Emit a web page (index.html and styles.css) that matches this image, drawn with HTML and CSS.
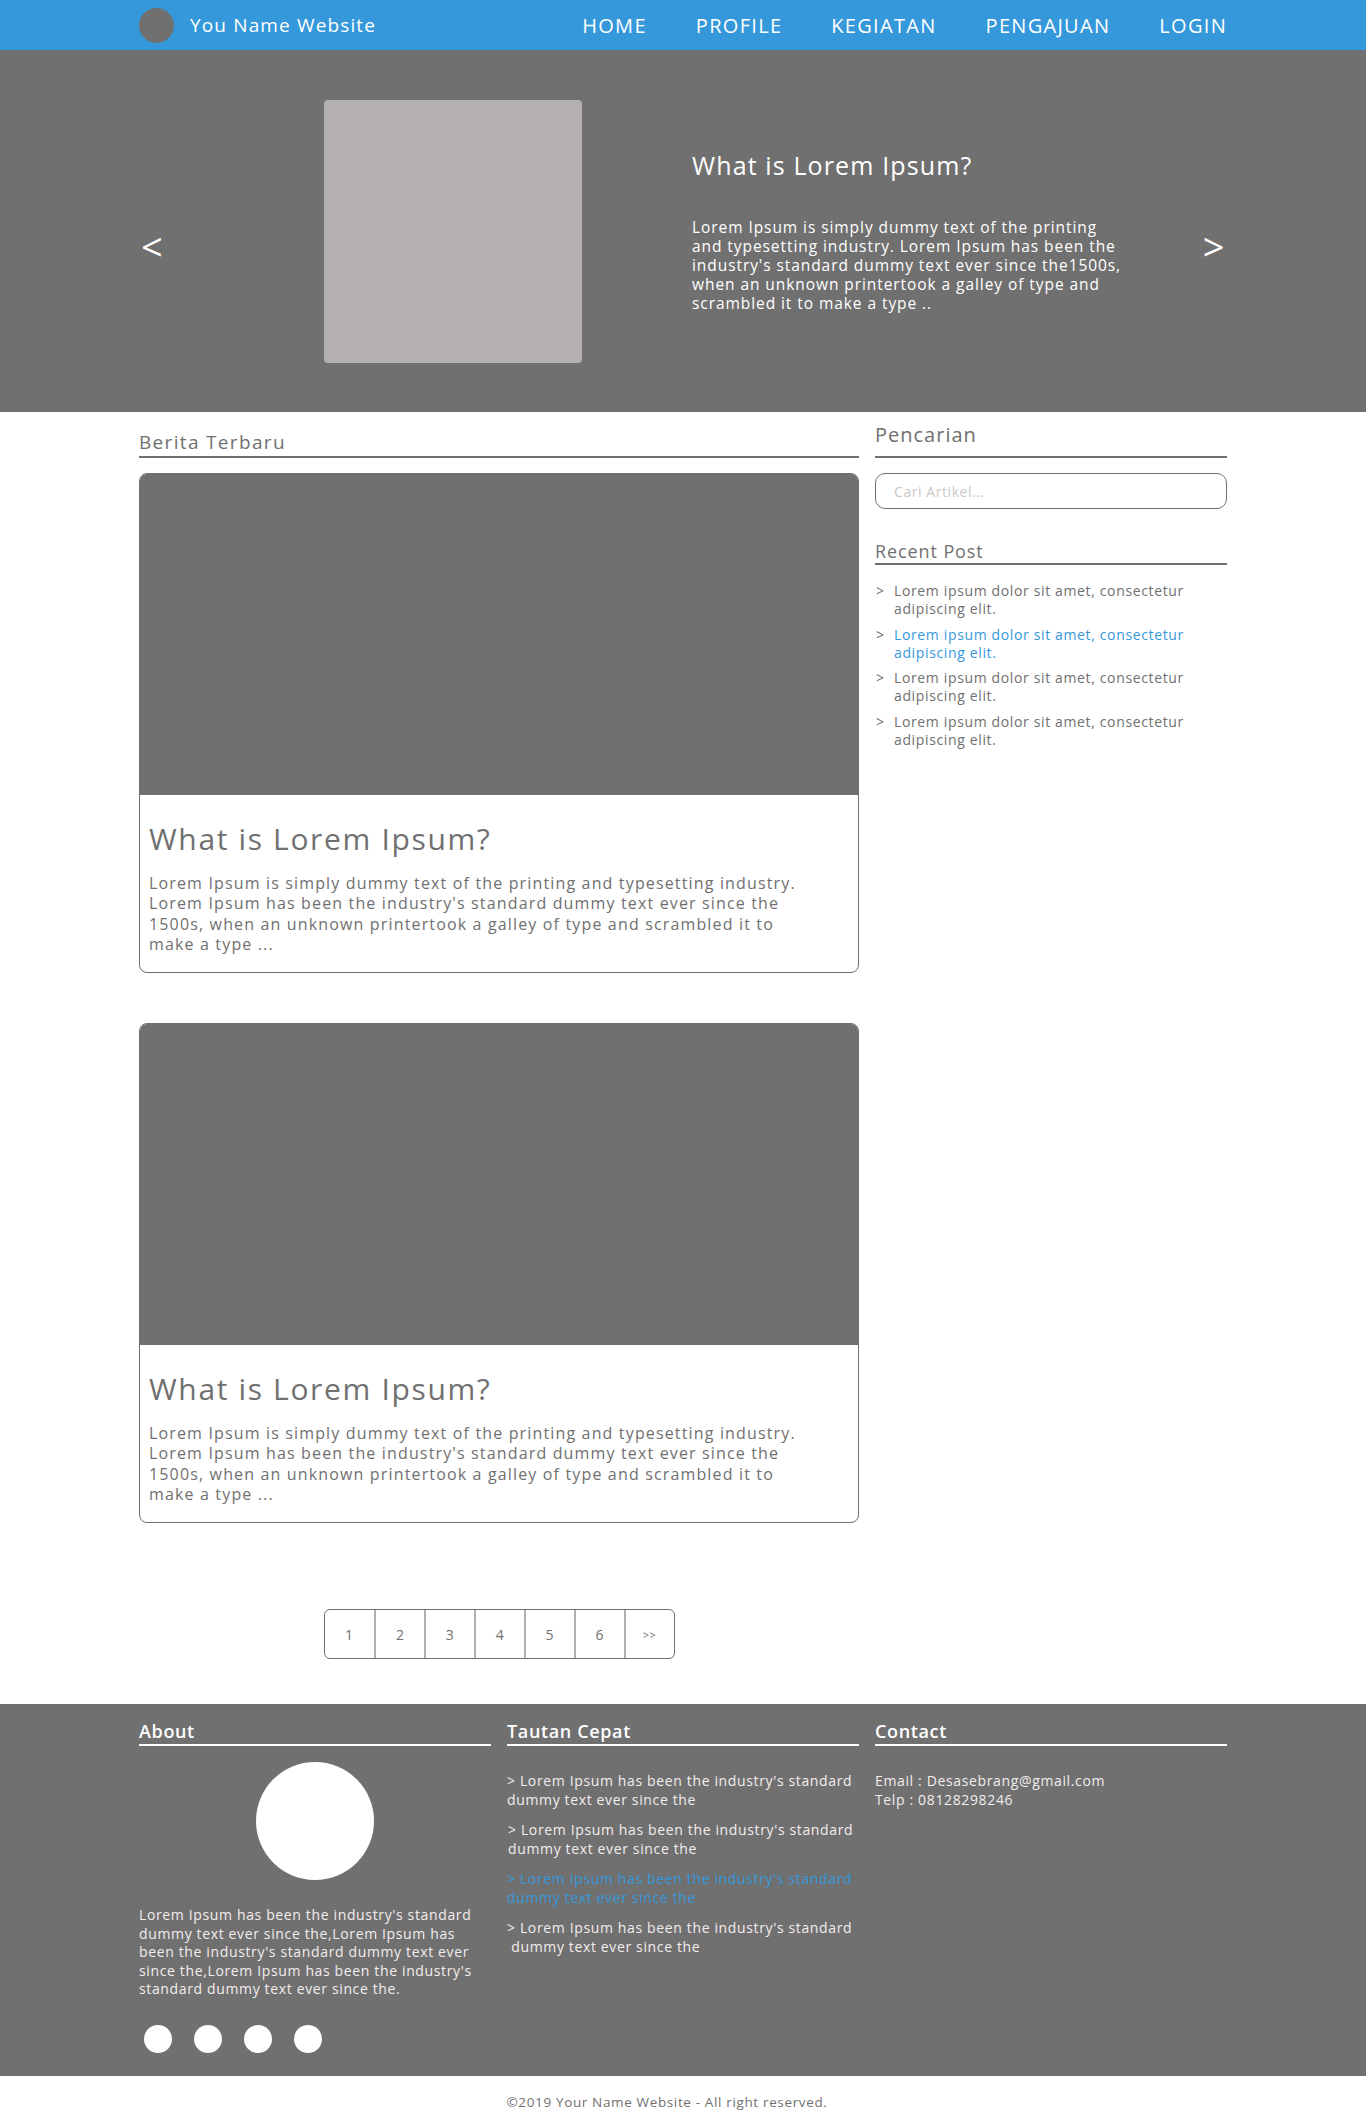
FILE: index.html
```html
<!DOCTYPE html>
<html lang="id">
<head>
<meta charset="utf-8">
<title>You Name Website</title>
<link rel="stylesheet" href="styles.css">
</head>
<body>
<header class="navbar">
  <div class="container nav-inner">
    <a class="brand" href="#"><span class="brand-logo"></span><span class="brand-name">You Name Website</span></a>
    <nav class="menu">
      <a href="#">HOME</a>
      <a href="#">PROFILE</a>
      <a href="#">KEGIATAN</a>
      <a href="#">PENGAJUAN</a>
      <a href="#">LOGIN</a>
    </nav>
  </div>
</header>

<section class="hero">
  <div class="container hero-inner">
    <span class="arrow">&lt;</span>
    <div class="slide">
      <div class="slide-img"></div>
      <div class="slide-text">
        <h1>What is Lorem Ipsum?</h1>
        <p>Lorem Ipsum is simply dummy text of the printing<br>and typesetting industry. Lorem Ipsum has been the<br>industry's standard dummy text ever since the1500s,<br>when an unknown printertook a galley of type and<br>scrambled it to make a type ..</p>
      </div>
    </div>
    <span class="arrow arrow-right">&gt;</span>
  </div>
</section>

<main class="container main">
  <section class="news">
    <h2 class="section-title">Berita Terbaru</h2>
    <article class="card">
      <div class="card-img"></div>
      <div class="card-body">
        <h3>What is Lorem Ipsum?</h3>
        <p>Lorem Ipsum is simply dummy text of the printing and typesetting industry. Lorem Ipsum has been the industry's standard dummy text ever since the 1500s, when an unknown printertook a galley of type and scrambled it to make a type ...</p>
      </div>
    </article>
    <article class="card">
      <div class="card-img"></div>
      <div class="card-body">
        <h3>What is Lorem Ipsum?</h3>
        <p>Lorem Ipsum is simply dummy text of the printing and typesetting industry. Lorem Ipsum has been the industry's standard dummy text ever since the 1500s, when an unknown printertook a galley of type and scrambled it to make a type ...</p>
      </div>
    </article>
    <div class="pagination">
      <a href="#">1</a><a href="#">2</a><a href="#">3</a><a href="#">4</a><a href="#">5</a><a href="#">6</a><a href="#" class="next">&gt;&gt;</a>
    </div>
  </section>

  <aside class="sidebar">
    <h2 class="side-title">Pencarian</h2>
    <input class="search" type="text" placeholder="Cari Artikel...">
    <h2 class="side-title recent-title">Recent Post</h2>
    <ul class="recent">
      <li><span class="chev">&gt;</span><a href="#">Lorem ipsum dolor sit amet, consectetur adipiscing elit.</a></li>
      <li class="active"><span class="chev">&gt;</span><a href="#">Lorem ipsum dolor sit amet, consectetur adipiscing elit.</a></li>
      <li><span class="chev">&gt;</span><a href="#">Lorem ipsum dolor sit amet, consectetur adipiscing elit.</a></li>
      <li><span class="chev">&gt;</span><a href="#">Lorem ipsum dolor sit amet, consectetur adipiscing elit.</a></li>
    </ul>
  </aside>
</main>

<footer class="footer">
  <div class="container footer-inner">
    <div class="fcol">
      <h4>About</h4>
      <div class="about-avatar"></div>
      <p class="about-text">Lorem Ipsum has been the industry's standard dummy text ever since the,Lorem Ipsum has been the industry's standard dummy text ever since the,Lorem Ipsum has been the industry's standard dummy text ever since the.</p>
      <div class="socials"><span></span><span></span><span></span><span></span></div>
    </div>
    <div class="fcol">
      <h4>Tautan Cepat</h4>
      <ul class="links">
        <li><a href="#">&gt; Lorem Ipsum has been the industry's standard dummy text ever since the</a></li>
        <li class="indent"><a href="#">&gt; Lorem Ipsum has been the industry's standard dummy text ever since the</a></li>
        <li class="active"><a href="#">&gt; Lorem Ipsum has been the industry's standard dummy text ever since the</a></li>
        <li><a href="#">&gt; Lorem Ipsum has been the industry's standard<br>&nbsp;dummy text ever since the</a></li>
      </ul>
    </div>
    <div class="fcol">
      <h4>Contact</h4>
      <p class="contact">Email : Desasebrang@gmail.com<br>Telp : 08128298246</p>
    </div>
  </div>
</footer>
<div class="copyright">©2019 Your Name Website - All right reserved.</div>
</body>
</html>
```

FILE: styles.css
```css
* { box-sizing: border-box; }
body {
  margin: 0;
  font-family: "Open Sans", "Liberation Sans", sans-serif;
  color: #707070;
  background: #fff;
  letter-spacing: 0.04em;
}
a { color: inherit; text-decoration: none; }
ul { list-style: none; margin: 0; padding: 0; }
h1, h2, h3, h4, p { margin: 0; font-weight: 400; }

.container { width: 1088px; margin: 0 auto; }

/* navbar */
.navbar { background: #3598db; height: 50px; }
.nav-inner { display: flex; align-items: center; justify-content: space-between; height: 50px; }
.brand { display: flex; align-items: center; color: #fff; }
.brand-logo { width: 35px; height: 35px; border-radius: 50%; background: #707070; }
.brand-name { margin-left: 16px; font-size: 19px; letter-spacing: 0.06em; }
.menu { display: flex; gap: 49px; }
.menu a { color: #fff; font-size: 20px; letter-spacing: 0.065em; }

/* hero */
.hero { background: #707070; height: 362px; color: #fff; }
.hero-inner { display: flex; align-items: center; height: 362px; }
.arrow { font-size: 38px; line-height: 1; width: 26px; padding-top: 30px; margin-left: 2px; }
.arrow-right { margin-left: auto; margin-right: 2px; text-align: right; }
.slide { display: flex; align-items: center; margin-left: 157px; gap: 110px; }
.slide-img { width: 258px; height: 263px; background: #b4b0af; border-radius: 4px; }
.slide-text { width: 470px; }
.slide-text h1 { font-size: 25px; line-height: 30px; margin-bottom: 38px; letter-spacing: 0.045em; }
.slide-text p { font-size: 15.5px; line-height: 19px; font-weight: 500; letter-spacing: 0.06em; white-space: nowrap; }

/* main */
.main { display: flex; gap: 16px; padding-top: 18px; }
.news { width: 720px; }
.section-title { font-size: 19px; line-height: 24px; padding-bottom: 2px; border-bottom: 2px solid #707070; margin-bottom: 15px; letter-spacing: 0.07em; }
.card { border: 1px solid #707070; border-radius: 8px; overflow: hidden; margin-bottom: 50px; }
.card-img { height: 321px; background: #707070; }
.card-body { padding: 26px 9px 18px; }
.card-body h3 { font-size: 30px; line-height: 36px; margin-bottom: 16px; letter-spacing: 0.055em; }
.card-body p { font-size: 16px; line-height: 20.3px; max-width: 665px; letter-spacing: 0.072em; }

.pagination { display: flex; width: 351px; margin: 86px auto 45px; border: 1px solid #707070; border-radius: 6px; overflow: hidden; }
.pagination a { width: 50px; height: 48px; display: flex; align-items: center; justify-content: center; font-size: 14px; border-left: 2px solid #b4b0af; }
.pagination a:first-child { border-left: none; }
.pagination .next { font-size: 11px; }

/* sidebar */
.sidebar { width: 352px; }
.side-title { font-size: 20px; line-height: 24px; padding-bottom: 9px; border-bottom: 2px solid #707070; margin-top: -7px; margin-bottom: 15px; letter-spacing: 0.05em; }
.search { display: block; width: 100%; height: 36px; border: 1px solid #707070; border-radius: 10px; padding: 0 18px; font-family: inherit; font-size: 14px; letter-spacing: 0.04em; color: #707070; outline: none; }
.search::placeholder { color: #c8c8c8; }
.recent-title { font-size: 18px; line-height: 22px; padding-bottom: 1px; margin-top: 31px; margin-bottom: 17px; }
.recent li { display: flex; font-size: 14px; line-height: 18px; margin-bottom: 7.5px; }
.recent .chev { width: 19px; flex: none; padding-left: 1px; }
.recent li.active a { color: #3598db; }

/* footer */
.footer { background: #707070; color: #f3eded; }
.footer-inner { display: flex; gap: 16px; padding: 16px 0 23px; }
.fcol { width: 352px; }
.fcol h4 { color: #fff; font-size: 18px; font-weight: 600; line-height: 22px; padding-bottom: 2px; border-bottom: 2px solid #fff; margin-bottom: 26px; }
.about-avatar { width: 118px; height: 118px; border-radius: 50%; background: #fff; margin: -10px auto 26px; }
.about-text { font-size: 14px; line-height: 18.5px; font-weight: 500; width: 345px; }
.socials { display: flex; gap: 22px; margin-top: 26px; padding-left: 5px; }
.socials span { width: 28px; height: 28px; border-radius: 50%; background: #fff; }
.links li { font-size: 14px; line-height: 18.5px; font-weight: 500; margin-bottom: 12px; }
.links li.indent { padding-left: 1px; }
.links li.active a { color: #3598db; }
.contact { font-size: 14px; line-height: 18.5px; font-weight: 500; }

.copyright { height: 52px; display: flex; align-items: center; justify-content: center; padding-right: 32px; font-size: 13.5px; color: #707070; }
```
